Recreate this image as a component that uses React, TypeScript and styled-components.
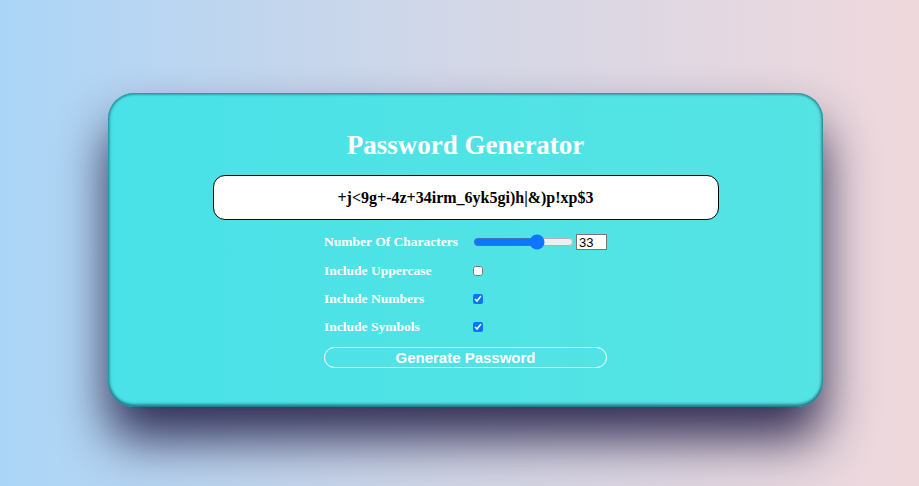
import React, { useState } from "react";
import styled, { createGlobalStyle } from "styled-components";

const Global = createGlobalStyle`
  html, body { margin: 0; padding: 0; }
  body {
    min-height: 486px;
    background: linear-gradient(to right, #abd5f7 0%, #d3d7e7 50%, #efd8dc 100%);
    font-family: "Liberation Serif", serif;
  }
`;

const Page = styled.main`
  display: flex;
  align-items: flex-start;
  padding: 93px 0 0 108px;
  min-height: 486px;
  box-sizing: border-box;
`;

const Card = styled.section`
  width: 715px;
  box-sizing: border-box;
  padding: 37px 0 39px;
  border-radius: 26px;
  background: rgba(44, 230, 228, 0.79);
  box-shadow:
    inset 0 -3px 3px rgba(10, 70, 90, 0.55),
    inset -2px 0 3px rgba(10, 70, 90, 0.35),
    inset 2px 0 3px rgba(10, 70, 90, 0.3),
    inset 0 2px 2px rgba(10, 70, 90, 0.3),
    0 32px 50px rgba(35, 30, 70, 0.92);
  display: flex;
  flex-direction: column;
  align-items: center;
`;

const Title = styled.h1`
  margin: 0;
  font-family: "Liberation Serif", serif;
  font-weight: 700;
  font-size: 27px;
  line-height: 30px;
  color: #ffffff;
`;

const Output = styled.div`
  margin-top: 15px;
  width: 506px;
  height: 45px;
  box-sizing: border-box;
  border: 1px solid #000;
  border-radius: 12px;
  background: #fff;
  display: flex;
  align-items: center;
  justify-content: center;
  font-family: "Liberation Serif", serif;
  font-weight: 700;
  font-size: 16px;
  color: #000;
`;

const Form = styled.form`
  margin-top: 8px;
  width: 283px;
  display: grid;
  grid-template-columns: 149px 1fr;
  grid-auto-rows: 28.4px;
  align-items: center;
`;

const Label = styled.label`
  font-family: "Liberation Serif", serif;
  font-weight: 700;
  font-size: 13.5px;
  color: #fff;
  white-space: nowrap;
`;

const Field = styled.div`
  display: flex;
  align-items: center;
  gap: 2px;
`;

const Range = styled.input`
  width: 101px;
  margin: 0;
  accent-color: #0d75ff;
`;

const NumberBox = styled.input`
  width: 31px;
  height: 16px;
  box-sizing: border-box;
  margin: 0;
  padding: 0 2px;
  font-family: "Liberation Sans", Arial, sans-serif;
  font-size: 13px;
  border: 1px solid #767676;
  &::-webkit-inner-spin-button { display: none; }
`;

const Check = styled.input`
  width: 10px;
  height: 10px;
  margin: 0;
`;

const Button = styled.button`
  margin-top: 5px;
  width: 283px;
  height: 21px;
  box-sizing: border-box;
  border: 1px solid #fff;
  border-radius: 11px;
  background: transparent;
  color: #fff;
  font-family: "Liberation Sans", Arial, sans-serif;
  font-weight: 700;
  font-size: 15px;
  line-height: 17px;
  padding: 0;
  cursor: pointer;
`;

export default function App() {
  const [len, setLen] = useState(33);
  const [upper, setUpper] = useState(false);
  const [nums, setNums] = useState(true);
  const [syms, setSyms] = useState(true);
  return (
    <>
      <Global />
      <Page>
        <Card>
          <Title>Password Generator</Title>
          <Output>+j&lt;9g+-4z+34irm_6yk5gi)h|&amp;)p!xp$3</Output>
          <Form onSubmit={(e) => e.preventDefault()}>
            <Label htmlFor="len">Number Of Characters</Label>
            <Field>
              <Range
                id="len"
                type="range"
                min={1}
                max={50}
                value={len}
                onChange={(e) => setLen(Number(e.target.value))}
              />
              <NumberBox
                type="number"
                min={1}
                max={50}
                value={len}
                onChange={(e) => setLen(Number(e.target.value))}
              />
            </Field>
            <Label htmlFor="up">Include Uppercase</Label>
            <Field>
              <Check id="up" type="checkbox" checked={upper} onChange={() => setUpper(!upper)} />
            </Field>
            <Label htmlFor="num">Include Numbers</Label>
            <Field>
              <Check id="num" type="checkbox" checked={nums} onChange={() => setNums(!nums)} />
            </Field>
            <Label htmlFor="sym">Include Symbols</Label>
            <Field>
              <Check id="sym" type="checkbox" checked={syms} onChange={() => setSyms(!syms)} />
            </Field>
          </Form>
          <Button type="button">Generate Password</Button>
        </Card>
      </Page>
    </>
  );
}
